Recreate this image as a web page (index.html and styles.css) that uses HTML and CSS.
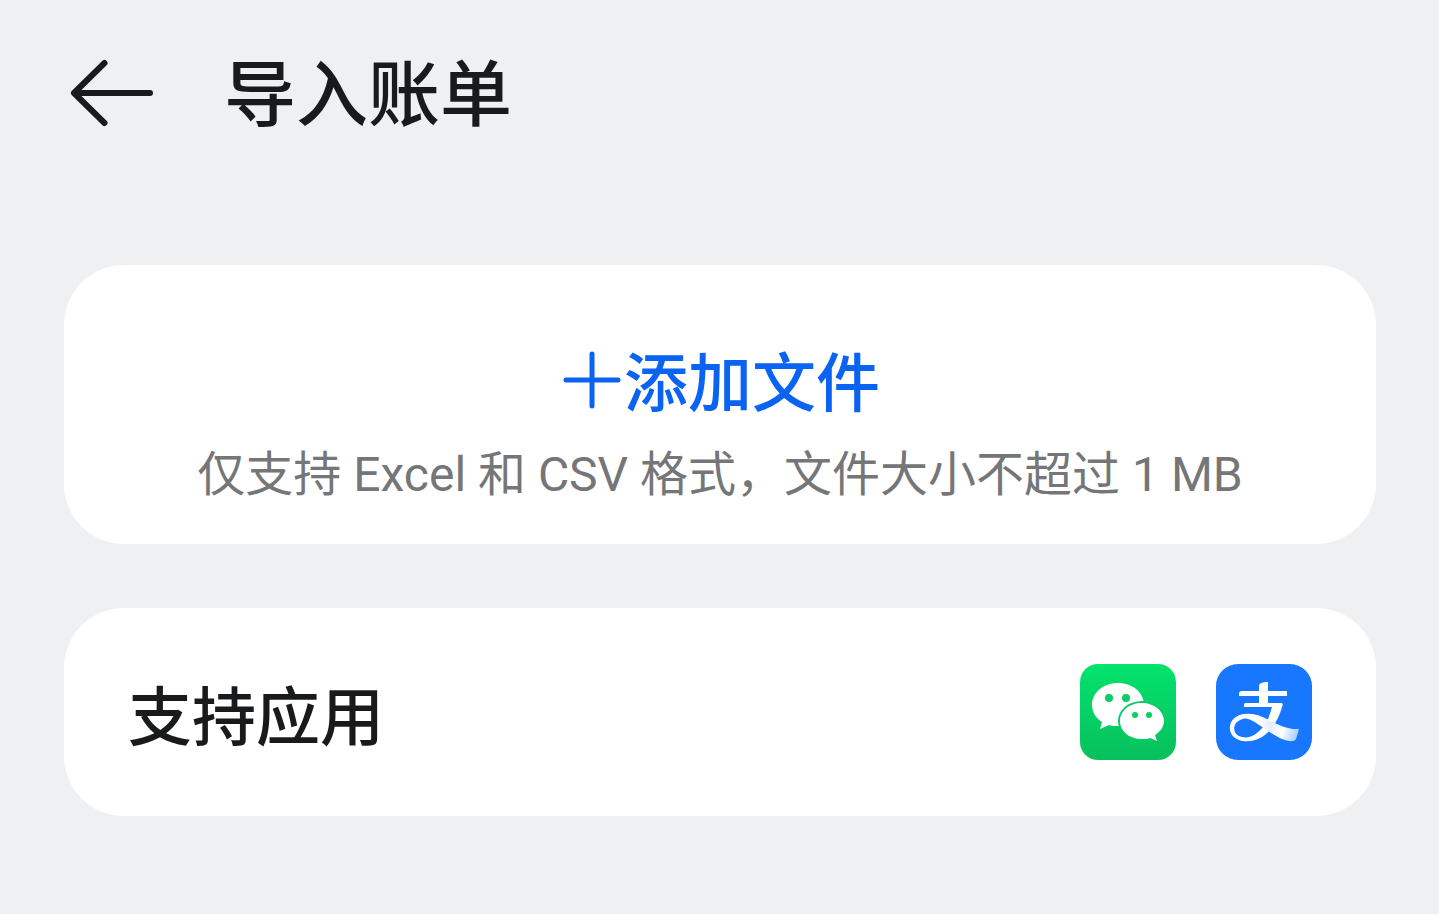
FILE: index.html
```html
<!DOCTYPE html>
<html lang="zh-CN">
<head>
<meta charset="utf-8">
<meta name="viewport" content="width=device-width, initial-scale=1">
<title>导入账单</title>
<link rel="stylesheet" href="styles.css">
</head>
<body>
<header class="topbar">
  <button class="back" type="button" aria-label="返回">
    <svg class="back-icon" viewBox="0 0 96 96" aria-hidden="true">
      <path d="M86 48H10M40.500 18L10 48L40.500 78"/>
    </svg>
  </button>
  <h1 class="title">导入账单</h1>
</header>
<main class="content">
  <section class="card upload">
    <button class="add" type="button">
      <svg class="add-icon" viewBox="0 0 64 64" aria-hidden="true"><path d="M32 6V58M6 32H58"/></svg>
      <span class="add-label">添加文件</span>
    </button>
    <p class="hint">仅支持 Excel 和 CSV 格式，文件大小不超过 1 MB</p>
  </section>
  <section class="card apps">
    <h2 class="apps-title">支持应用</h2>
    <div class="app-icons">
      <svg class="app-icon" viewBox="0 0 96 96" role="img" aria-label="微信">
        <defs>
          <linearGradient id="wx" x1="0" y1="0" x2="0" y2="1">
            <stop offset="0" stop-color="#03e36d"/>
            <stop offset="1" stop-color="#08bf5c"/>
          </linearGradient>
        </defs>
        <rect width="96" height="96" rx="18" fill="url(#wx)"/>
        <path fill="#fff" d="M38 19C23 19 12 29 12 41C12 48 16 54 22 58L20 65L29 61C32 62 35 62 38 62C53 62 64 53 64 41C64 29 53 19 38 19Z"/>
        <ellipse cx="62" cy="57" rx="24" ry="20" fill="#06cc63"/>
        <path fill="#fff" d="M62 39C49 39 40 47 40 57C40 67 49 75 62 75C65 75 68 75 70 74L77 77L75 71C81 67 84 62 84 57C84 47 74 39 62 39Z"/>
        <g fill="#06cf65">
          <circle cx="29" cy="34" r="4"/><circle cx="46" cy="34" r="4"/>
          <circle cx="55" cy="51" r="3"/><circle cx="69" cy="51" r="3"/>
        </g>
      </svg>
      <svg class="app-icon" viewBox="0 0 96 96" role="img" aria-label="支付宝">
        <defs>
          <linearGradient id="tail" gradientUnits="userSpaceOnUse" x1="42" y1="58" x2="83" y2="72">
            <stop offset="0" stop-color="#fff"/>
            <stop offset="0.3" stop-color="#e4efff"/>
            <stop offset="0.6" stop-color="#fff"/>
            <stop offset="1" stop-color="#9cc6ff"/>
          </linearGradient>
        </defs>
        <rect width="96" height="96" rx="22" fill="#1777fe"/>
        <path fill="#fff" d="M43 22C43 19 47 18 52 18V27H71V32H52V39H65C67 39 67 41 66 43C63 54 57 66 46 73C36 79 22 79 16 71C11 63 15 54 24 51C30 49 36 50 43 52L40 56C32 53 25 54 20 59C16 65 19 72 26 73C35 75 42 69 47 63C52 57 54 50 56 43H28V41C28 39 29 39 31 39H43V32H23V30C23 28 24 27 26 27H43Z"/>
        <path fill="url(#tail)" d="M24 51C34 48 43 51 51 55C61 60 71 66 83 65C82 69 81 72 80 75C78 79 69 77 62 73C50 67 39 56 29 54C25 53 22 55 19 58C19 55 21 52 24 51Z"/>
      </svg>
    </div>
  </section>
</main>
</body>
</html>
```
FILE: styles.css
```css
* { box-sizing: border-box; }

body {
  margin: 0;
  min-height: 100vh;
  background: #eff0f2;
  color: #181a1b;
  font-family: "Noto Sans CJK SC", sans-serif;
}

button {
  padding: 0;
  border: 0;
  background: none;
  font: inherit;
  cursor: pointer;
}

.topbar {
  display: flex;
  align-items: center;
  gap: 64px;
  padding: 41px 64px 40px;
}

.back { display: flex; color: #181a1b; }

.back-icon {
  width: 96px;
  height: 96px;
  fill: none;
  stroke: currentColor;
  stroke-width: 6;
  stroke-linecap: round;
  stroke-linejoin: round;
}

.title {
  margin: 0;
  padding-bottom: 8px;
  font-size: 72px;
  line-height: 96px;
  font-weight: 500;
}

.content {
  display: flex;
  flex-direction: column;
  gap: 64px;
  padding: 80px 63px 64px 64px;
}

.card {
  border-radius: 60px;
  background: #fff;
}

.upload {
  display: flex;
  flex-direction: column;
  align-items: center;
  padding: 69px 64px 33px;
  text-align: center;
}

.add {
  display: flex;
  align-items: center;
  color: #0a63f2;
  font-size: 64px;
  line-height: 88px;
  font-weight: 500;
}

.add-label { padding-bottom: 4px; }

.add-icon {
  width: 64px;
  height: 64px;
  fill: none;
  stroke: currentColor;
  stroke-width: 5;
  stroke-linecap: round;
}

.hint {
  margin: 13px 0 0;
  color: #757677;
  font-family: Roboto, "Noto Sans CJK SC", sans-serif;
  font-size: 48px;
  line-height: 72px;
  font-weight: 400;
}

.apps {
  display: flex;
  align-items: center;
  justify-content: space-between;
  padding: 56px 64px;
}

.apps-title {
  margin: 0;
  font-size: 64px;
  line-height: 96px;
  font-weight: 500;
}

.app-icons { display: flex; gap: 40px; }

.app-icon { width: 96px; height: 96px; }
```
